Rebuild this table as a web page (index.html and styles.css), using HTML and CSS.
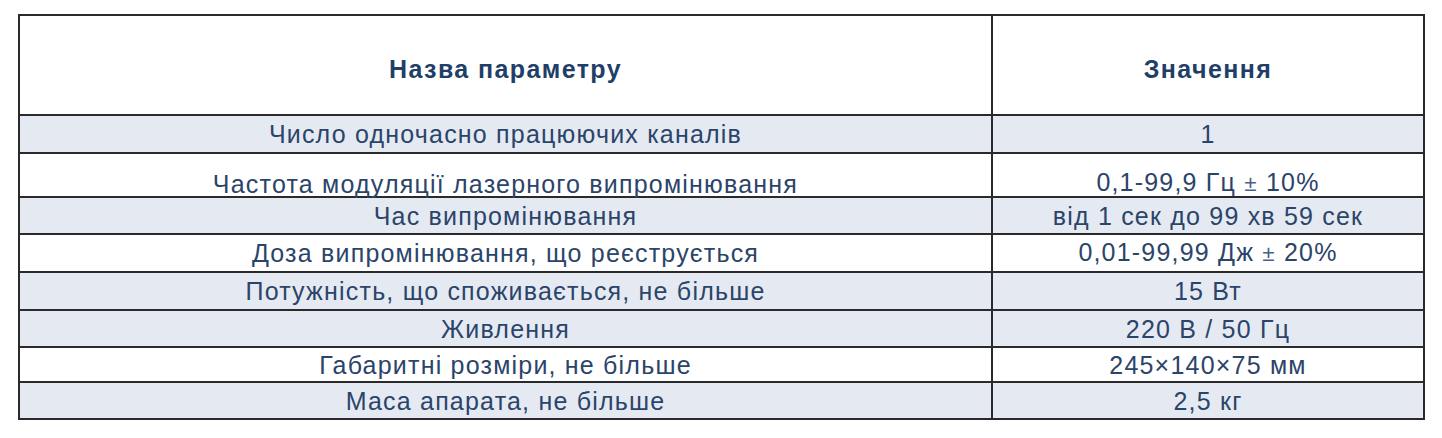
FILE: index.html
```html
<!DOCTYPE html>
<html lang="uk">
<head>
<meta charset="utf-8">
<title>Параметри</title>
<link rel="stylesheet" href="styles.css">
</head>
<body>
<table class="spec">
  <colgroup>
    <col class="col-name">
    <col class="col-value">
  </colgroup>
  <thead>
    <tr class="head-row">
      <th>Назва параметру</th>
      <th>Значення</th>
    </tr>
  </thead>
  <tbody>
    <tr class="row shaded h38"><td>Число одночасно працюючих каналів</td><td>1</td></tr>
    <tr class="row tall"><td>Частота модуляції лазерного випромінювання</td><td>0,1-99,9 Гц <span class="pm">±</span> 10%</td></tr>
    <tr class="row shaded h37"><td>Час випромінювання</td><td>від 1 сек до 99 хв 59 сек</td></tr>
    <tr class="row h38"><td>Доза випромінювання, що реєструється</td><td>0,01-99,99 Дж <span class="pm">±</span> 20%</td></tr>
    <tr class="row shaded h38"><td>Потужність, що споживається, не більше</td><td>15 Вт</td></tr>
    <tr class="row shaded h37"><td>Живлення</td><td>220 В / 50 Гц</td></tr>
    <tr class="row h36"><td>Габаритні розміри, не більше</td><td>245×140×75 мм</td></tr>
    <tr class="row shaded h37"><td>Маса апарата, не більше</td><td>2,5 кг</td></tr>
  </tbody>
</table>
</body>
</html>
```

FILE: styles.css
```css
html, body {
  margin: 0;
  padding: 0;
  background: #ffffff;
}

body {
  padding: 14px 0 0 18px;
  font-family: "Liberation Sans", Arial, sans-serif;
}

.spec {
  border-collapse: collapse;
  table-layout: fixed;
  width: 1405px;
  color: #2b4469;
}

.col-name { width: 973px; }
.col-value { width: 432px; }

.spec th,
.spec td {
  border: 2px solid #2a2a2a;
  text-align: center;
  padding: 0;
  white-space: nowrap;
}

.head-row th {
  height: 90px;
  font-size: 25px;
  letter-spacing: 1.4px;
  font-weight: bold;
  color: #1f3f69;
  padding-top: 8px;
}

.row td {
  font-size: 25px;
  letter-spacing: 1.2px;
  line-height: 28px;
  vertical-align: middle;
}

.shaded td { background: #e5eaf2; }

.h38 td { height: 36px; }
.h37 td { height: 35px; }
.h36 td { height: 33px; }

.tall td {
  height: 42px;
  line-height: 24px;
  vertical-align: bottom;
  padding-bottom: 0;
}

.pm {
  font-size: 0.9em;
  color: #4a6088;
}
```
